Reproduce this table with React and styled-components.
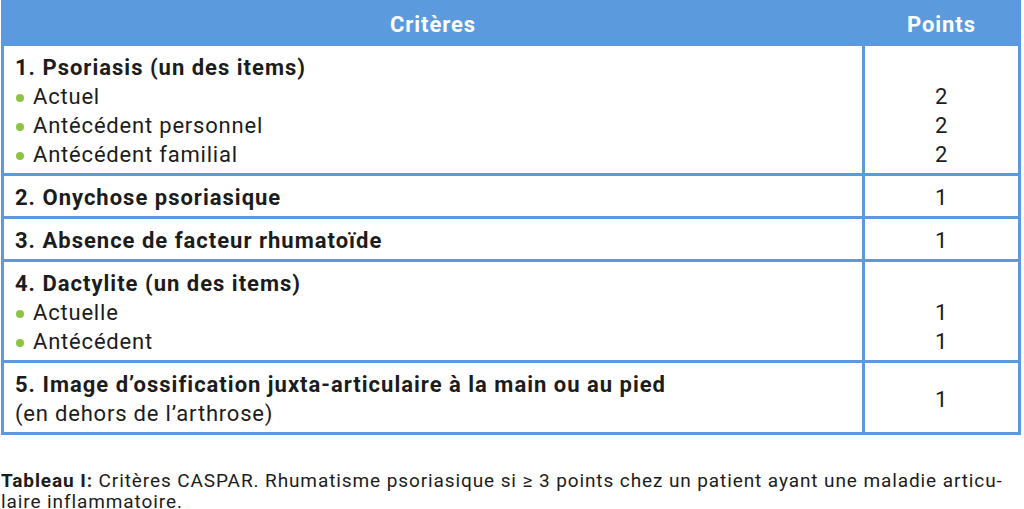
import React from 'react';
import styled, { createGlobalStyle } from 'styled-components';

const GlobalStyle = createGlobalStyle`
  body {
    margin: 0;
    background: #ffffff;
    font-family: Roboto, "Noto Sans", sans-serif;
    color: #1c1c1c;
  }
`;

const BLUE = '#5b9bdd';

const criteria = [
  {
    title: '1. Psoriasis (un des items)',
    items: [
      { label: 'Actuel', points: 2 },
      { label: 'Antécédent personnel', points: 2 },
      { label: 'Antécédent familial', points: 2 },
    ],
  },
  { title: '2. Onychose psoriasique', points: 1 },
  { title: '3. Absence de facteur rhumatoïde', points: 1 },
  {
    title: '4. Dactylite (un des items)',
    items: [
      { label: 'Actuelle', points: 1 },
      { label: 'Antécédent', points: 1 },
    ],
  },
  {
    title: "5. Image d’ossification juxta-articulaire à la main ou au pied",
    note: '(en dehors de l’arthrose)',
    points: 1,
  },
];

function App() {
  return (
    <Page>
      <GlobalStyle />
      <Table>
        <thead>
          <tr>
            <HeadCell>Critères</HeadCell>
            <HeadCell narrow>Points</HeadCell>
          </tr>
        </thead>
        <tbody>
          {criteria.map((row, index) => (
            <tr key={index}>
              <Cell>
                <Title>{row.title}</Title>
                {row.note && <Line>{row.note}</Line>}
                {row.items &&
                  row.items.map((item) => (
                    <Line key={item.label}>
                      <Bullet />
                      {item.label}
                    </Line>
                  ))}
              </Cell>
              <PointsCell>
                {row.items ? (
                  <>
                    <Value>&nbsp;</Value>
                    {row.items.map((item) => (
                      <Value key={item.label}>{item.points}</Value>
                    ))}
                  </>
                ) : (
                  <Value>{row.points}</Value>
                )}
              </PointsCell>
            </tr>
          ))}
        </tbody>
      </Table>
      <Caption>
        <strong>Tableau I:</strong> Critères CASPAR. Rhumatisme psoriasique si ≥ 3 points chez
        un patient ayant une maladie articu-
        <br />
        laire inflammatoire.
      </Caption>
    </Page>
  );
}

const Page = styled.main`
  width: 1024px;
  padding: 0 0 0 1px;
  box-sizing: border-box;
`;

const Table = styled.table`
  width: 1020px;
  border-collapse: collapse;
  border: 3px solid ${BLUE};
  margin: 0;
`;

const HeadCell = styled.th`
  width: ${(props) => (props.narrow ? '153px' : 'auto')};
  height: 38px;
  padding: 2px 0 0;
  background: ${BLUE};
  color: #ffffff;
  font-size: 22px;
  font-weight: 700;
  letter-spacing: 0.9px;
  text-align: center;
  border: 3px solid ${BLUE};
  border-right-color: ${(props) => (props.narrow ? BLUE : '#ffffff')};
  border-right-width: ${(props) => (props.narrow ? '3px' : '2px')};
`;

const Cell = styled.td`
  padding: 7px 11px 4px;
  border: 3px solid ${BLUE};
  vertical-align: top;
  font-size: 22px;
  letter-spacing: 0.8px;
`;

const PointsCell = styled(Cell)`
  text-align: center;
  vertical-align: middle;
  padding: 7px 0 4px;
`;

const Title = styled.div`
  font-weight: 700;
  letter-spacing: 1px;
  line-height: 29px;
`;

const Line = styled.div`
  line-height: 29px;
  display: flex;
  align-items: center;
`;

const Value = styled.div`
  line-height: 29px;
`;

const Bullet = styled.span`
  width: 8px;
  height: 8px;
  border-radius: 50%;
  background: #8cc540;
  margin: 3px 9px 0 1px;
  flex-shrink: 0;
`;

const Caption = styled.p`
  margin: 35px 0 0 0;
  font-size: 19px;
  line-height: 21px;
  letter-spacing: 0.9px;
  color: #1c1c1c;

  strong {
    font-weight: 700;
  }
`;

export default App;
